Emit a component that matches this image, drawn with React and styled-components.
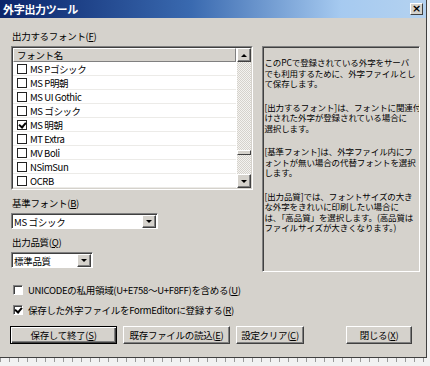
import styled, { createGlobalStyle } from "styled-components";

const GlobalStyle = createGlobalStyle`
  html, body {
    margin: 0;
    padding: 0;
    background: #f2f2f2;
  }
  body {
    font-family: "Noto Sans CJK JP", "Noto Sans", sans-serif;
    color: #000;
  }
`;

const FONTS = [
  { name: "MS Pゴシック", checked: false },
  { name: "MS P明朝", checked: false },
  { name: "MS UI Gothic", checked: false },
  { name: "MS ゴシック", checked: false },
  { name: "MS 明朝", checked: true },
  { name: "MT Extra", checked: false },
  { name: "MV Boli", checked: false },
  { name: "NSimSun", checked: false },
  { name: "OCRB", checked: false },
];

const HELP = [
  ["このPCで登録されている外字をサーバ", "でも利用するために、外字ファイルとし", "て保存します。"],
  ["[出力するフォント]は、フォントに関連付", "けされた外字が登録されている場合に", "選択します。"],
  ["[基準フォント]は、外字ファイル内にフ", "ォントが無い場合の代替フォントを選択", "します。"],
  [
    "[出力品質]では、フォントサイズの大き",
    "な外字をきれいに印刷したい場合に",
    "は、「高品質」を選択します。(高品質は",
    "ファイルサイズが大きくなります。)",
  ],
];

const App = () => {
  return (
    <>
      <GlobalStyle />
      <Window>
        <TitleBar>
          <Title>外字出力ツール</Title>
          <CloseBtn>×</CloseBtn>
        </TitleBar>

        <Body>
          <Top>
            <LeftCol>
              <Label>
                出力するフォント(<u>F</u>)
              </Label>
              <ListBox>
                <ListInner>
                  <ListMain>
                    <ListHeader>フォント名</ListHeader>
                    {FONTS.map((f) => (
                      <Row key={f.name}>
                        <FlatCheck>{f.checked && <CheckMark />}</FlatCheck>
                        <RowText>{f.name}</RowText>
                      </Row>
                    ))}
                  </ListMain>
                  <ScrollBar>
                    <ScrollBtn>
                      <Arrow $up />
                    </ScrollBtn>
                    <Track>
                      <Thumb $offset={88} />
                    </Track>
                    <ScrollBtn>
                      <Arrow />
                    </ScrollBtn>
                  </ScrollBar>
                </ListInner>
              </ListBox>

              <Label $spaced>
                基準フォント(<u>B</u>)
              </Label>
              <Combo $width={147}>
                <ComboText>MS ゴシック</ComboText>
                <ComboBtn>
                  <Arrow />
                </ComboBtn>
              </Combo>

              <Label $spaced>
                出力品質(<u>Q</u>)
              </Label>
              <Combo $width={82}>
                <ComboText>標準品質</ComboText>
                <ComboBtn>
                  <Arrow />
                </ComboBtn>
              </Combo>
            </LeftCol>

            <HelpPanel>
              {HELP.map((para, i) => (
                <Para key={i}>
                  {para.map((line) => (
                    <Line key={line}>{line}</Line>
                  ))}
                </Para>
              ))}
            </HelpPanel>
          </Top>

          <Options>
            <Option>
              <SunkCheck />
              <span>
                UNICODEの私用領域(U+E758～U+F8FF)を含める(<u>U</u>)
              </span>
            </Option>
            <Option>
              <SunkCheck>
                <CheckMark />
              </SunkCheck>
              <span>
                保存した外字ファイルをFormEditorに登録する(<u>R</u>)
              </span>
            </Option>
          </Options>

          <Buttons>
            <Button $width={107} $default>
              保存して終了(<u>S</u>)
            </Button>
            <Button $width={107}>
              既存ファイルの読込(<u>E</u>)
            </Button>
            <Button $width={68}>
              設定クリア(<u>C</u>)
            </Button>
            <Spacer />
            <Button $width={66}>
              閉じる(<u>X</u>)
            </Button>
          </Buttons>
        </Body>
      </Window>
      <Ticks />
    </>
  );
};

export default App;

const Window = styled.div`
  width: 427px;
  height: 358px;
  box-sizing: border-box;
  background: #d5d2cc;
  border-right: 1px solid #404040;
  border-bottom: 1px solid #404040;
  display: flex;
  flex-direction: column;
  font-size: 9.5px;
`;

const TitleBar = styled.div`
  height: 18px;
  flex-shrink: 0;
  background: linear-gradient(to right, #0a246a 0%, #3a6ab0 45%, #a6caf0 80%, #b4d2f0 100%);
  display: flex;
  align-items: center;
  justify-content: space-between;
  padding: 0 3px 0 3px;
`;

const Title = styled.span`
  color: #fff;
  font-weight: bold;
  font-size: 11px;
  letter-spacing: -0.3px;
`;

const CloseBtn = styled.div`
  width: 13px;
  height: 12px;
  box-sizing: border-box;
  background: #d5d2cc;
  border: 1px solid;
  border-color: #fff #404040 #404040 #fff;
  font-size: 11px;
  font-weight: bold;
  line-height: 9px;
  text-align: center;
  color: #000;
  font-family: "DejaVu Sans", sans-serif;
`;

const Body = styled.div`
  flex: 1;
  display: flex;
  flex-direction: column;
  padding: 8px 6px 0 11px;
`;

const Top = styled.div`
  display: flex;
  gap: 9px;
`;

const LeftCol = styled.div`
  width: 243px;
  display: flex;
  flex-direction: column;
`;

const Label = styled.div`
  height: 20px;
  margin-top: ${(p) => (p.$spaced ? "3px" : "0")};
  line-height: 20px;
  font-size: 9.5px;
  letter-spacing: -0.3px;
  padding-left: 1px;
`;

const ListBox = styled.div`
  height: 144px;
  box-sizing: border-box;
  border: 1px solid;
  border-color: #808080 #fff #fff #808080;
`;

const ListInner = styled.div`
  height: 100%;
  box-sizing: border-box;
  border: 1px solid;
  border-color: #404040 #d5d2cc #d5d2cc #404040;
  background: #fff;
  display: flex;
  overflow: hidden;
`;

const ListMain = styled.div`
  flex: 1;
  display: flex;
  flex-direction: column;
  overflow: hidden;
`;

const ListHeader = styled.div`
  height: 14px;
  flex-shrink: 0;
  box-sizing: border-box;
  background: #d5d2cc;
  border: 1px solid;
  border-color: #fff #808080 #808080 #fff;
  padding-left: 3px;
  line-height: 12px;
  font-size: 9.5px;
  letter-spacing: -0.3px;
`;

const Row = styled.div`
  height: 14px;
  flex-shrink: 0;
  box-sizing: border-box;
  border-bottom: 1px solid #ecebe8;
  display: flex;
  align-items: center;
  gap: 3px;
  padding-left: 4px;
`;

const FlatCheck = styled.div`
  width: 10px;
  height: 10px;
  box-sizing: border-box;
  border: 1.5px solid #222;
  background: #fff;
  position: relative;
  flex-shrink: 0;
`;

const SunkCheck = styled.div`
  width: 10px;
  height: 10px;
  box-sizing: border-box;
  border: 1px solid;
  border-color: #808080 #fff #fff #808080;
  box-shadow: inset 1px 1px #404040;
  background: #fff;
  position: relative;
  flex-shrink: 0;
`;

const CheckMark = styled.div`
  position: absolute;
  left: 2px;
  top: 0px;
  width: 3px;
  height: 5px;
  border: solid #000;
  border-width: 0 2px 2px 0;
  transform: rotate(40deg);
`;

const RowText = styled.span`
  font-size: 9.5px;
  line-height: 12px;
  letter-spacing: -0.4px;
  white-space: nowrap;
`;

const ScrollBar = styled.div`
  width: 14px;
  flex-shrink: 0;
  display: flex;
  flex-direction: column;
  border-left: 1px solid #fff;
`;

const ScrollBtn = styled.div`
  height: 14px;
  flex-shrink: 0;
  box-sizing: border-box;
  background: #d5d2cc;
  border: 1px solid;
  border-color: #fff #404040 #404040 #fff;
  box-shadow: inset -1px -1px #808080;
  display: flex;
  align-items: center;
  justify-content: center;
`;

const Arrow = styled.div`
  width: 0;
  height: 0;
  border-left: 3px solid transparent;
  border-right: 3px solid transparent;
  ${(p) =>
    p.$up ? "border-bottom: 3px solid #000;" : "border-top: 3px solid #000;"}
`;

const Track = styled.div`
  flex: 1;
  background: repeating-conic-gradient(#d5d2cc 0 25%, #f4f3f0 0 50%) 0 0 / 2px 2px;
  display: flex;
  flex-direction: column;
`;

const Thumb = styled.div`
  margin-top: ${(p) => p.$offset}px;
  height: 5px;
  box-sizing: border-box;
  background: #d5d2cc;
  border: 1px solid;
  border-color: #fff #404040 #404040 #fff;
`;

const Combo = styled.div`
  width: ${(p) => p.$width}px;
  height: 16px;
  box-sizing: border-box;
  border: 1px solid;
  border-color: #808080 #fff #fff #808080;
  box-shadow: inset 1px 1px #404040;
  background: #fff;
  display: flex;
  align-items: center;
  padding: 1px 1px 0 2px;
`;

const ComboText = styled.span`
  flex: 1;
  font-size: 9.5px;
  letter-spacing: -0.3px;
  white-space: nowrap;
`;

const ComboBtn = styled(ScrollBtn)`
  width: 14px;
  height: 13px;
`;

const HelpPanel = styled.div`
  margin-top: 20px;
  width: 158px;
  height: 226px;
  box-sizing: border-box;
  border: 1px solid;
  border-color: #808080 #fff #fff #808080;
  box-shadow: inset 1px 1px #404040;
  padding: 10px 0 0 1px;
  display: flex;
  flex-direction: column;
  gap: 13px;
  overflow: hidden;
`;

const Para = styled.div`
  display: flex;
  flex-direction: column;
`;

const Line = styled.div`
  font-size: 8.5px;
  line-height: 10.5px;
  letter-spacing: -0.1px;
  white-space: nowrap;
`;

const Options = styled.div`
  margin-top: 8px;
  display: flex;
  flex-direction: column;
`;

const Option = styled.div`
  height: 20px;
  display: flex;
  align-items: center;
  gap: 5px;
  padding-left: 2px;
  font-size: 9.5px;
  letter-spacing: -0.3px;
  white-space: nowrap;
`;

const Buttons = styled.div`
  margin-top: 6px;
  display: flex;
  gap: 6px;
  padding-right: 8px;
  margin-left: -1px;
`;

const Spacer = styled.div`
  flex: 1;
`;

const Button = styled.div`
  width: ${(p) => p.$width}px;
  height: 18px;
  box-sizing: border-box;
  background: #d5d2cc;
  border: 1px solid;
  border-color: ${(p) => (p.$default ? "#000" : "#fff #404040 #404040 #fff")};
  box-shadow: ${(p) =>
    p.$default
      ? "inset 1px 1px #fff, inset -1px -1px #404040, inset -2px -2px #808080"
      : "inset -1px -1px #808080"};
  display: flex;
  align-items: center;
  justify-content: center;
  font-size: 9.5px;
  letter-spacing: -0.3px;
  white-space: nowrap;
`;

const Ticks = styled.div`
  width: 427px;
  height: 4px;
  background: repeating-linear-gradient(to right, #9a9a9a 0 1px, transparent 1px 9px);
`;
